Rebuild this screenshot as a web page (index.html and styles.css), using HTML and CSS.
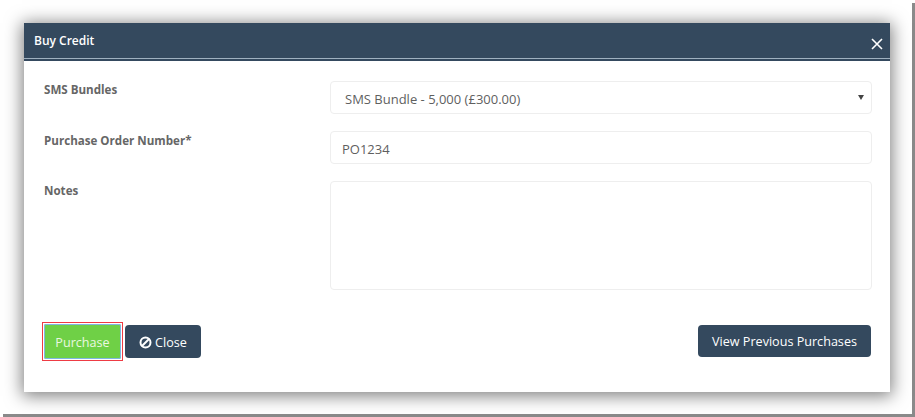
FILE: index.html
```html
<!DOCTYPE html>
<html lang="en">
<head>
<meta charset="utf-8">
<title>Buy Credit</title>
<link rel="stylesheet" href="styles.css">
</head>
<body>
<div class="frame">
  <div class="modal">
    <header class="modal-header">
      <h1 class="modal-title">Buy Credit</h1>
      <svg class="close-x" width="12" height="12" viewBox="0 0 12 12" aria-label="Close"><path d="M1 1L11 11M11 1L1 11" stroke="#fff" stroke-width="1.6" fill="none"/></svg>
    </header>
    <div class="modal-body">
      <div class="row row-select">
        <label class="label">SMS Bundles</label>
        <div class="field field-select"><span class="value">SMS Bundle - 5,000 (£300.00)</span><span class="caret"></span></div>
      </div>
      <div class="row row-input">
        <label class="label label-low">Purchase Order Number*</label>
        <div class="field field-input"><span class="value">PO1234</span></div>
      </div>
      <div class="row row-notes">
        <label class="label label-low">Notes</label>
        <div class="field field-notes"></div>
      </div>
    </div>
    <footer class="modal-footer">
      <div class="actions">
        <span class="highlight"><button class="btn btn-green">Purchase</button></span>
        <button class="btn btn-dark btn-close"><svg width="13" height="13" viewBox="0 0 13 13"><circle cx="6.5" cy="6.5" r="5" stroke="#fff" stroke-width="2" fill="none"/><path d="M3 10L10 3" stroke="#fff" stroke-width="2"/></svg>Close</button>
      </div>
      <button class="btn btn-dark btn-view">View Previous Purchases</button>
    </footer>
  </div>
</div>
</body>
</html>
```
FILE: styles.css
```css
* { box-sizing: border-box; }
html, body { margin: 0; height: 100%; background: #fff; }
body { font-family: "Open Sans", "Noto Sans", sans-serif; overflow: hidden; padding: 3px 0 0 3px; }
.frame {
  width: 912px; height: 414px;
  padding: 20px 22px 22px 21px;
  border-right: 3px solid #8a8a8a;
  border-bottom: 3px solid #8a8a8a;
  background: #fff;
}
.modal {
  width: 866px; height: 369px;
  background: #fff;
  box-shadow: 0 2px 16px 2px rgba(0,0,0,.5);
  display: flex; flex-direction: column;
}
.modal-header {
  height: 38px;
  background: #34495e;
  border-bottom: 2px solid #34495e;
  box-shadow: inset 0 -3px 0 -2px #9fb0bf;
  display: flex; align-items: center; justify-content: space-between;
  padding: 0 7px 0 10px;
}
.modal-title { margin: 0 0 1px; font-size: 12px; font-weight: 600; color: #fff; }
.close-x { margin-top: 5px; }
.modal-body { padding: 20px 18px 0 19px; display: flex; flex-direction: column; }
.row { display: flex; }
.row-select { height: 50px; }
.row-input { height: 50px; }
.label { width: 287px; flex: none; padding: 1px 0 0 1px; font-size: 11.6px; font-weight: 700; color: #666; }
.label-low { padding-top: 2px; }
.field {
  flex: 1;
  border: 1px solid #eeeeee;
  border-radius: 4px;
  font-size: 13px;
  color: #5f5f5f;
  display: flex; align-items: center;
}
.value { padding-top: 2px; }
.field-select { height: 33px; padding: 0 7px 0 14px; justify-content: space-between; }
.field-input { height: 33px; padding: 0 11px; }
.field-notes { height: 109px; }
.caret { width: 0; height: 0; border-left: 3px solid transparent; border-right: 3px solid transparent; border-top: 5px solid #444; }
.modal-footer {
  margin-top: 35px;
  padding: 0 19px 0 18px;
  display: flex; justify-content: space-between; align-items: flex-start;
}
.actions { display: flex; align-items: flex-start; gap: 2px; }
.highlight { display: block; border: 1px solid #ee3b44; padding: 1px; margin-top: -3px; }
.btn {
  font-family: inherit; font-size: 12.6px; color: #fff; border: 0; border-radius: 4px;
  height: 33px; padding: 1px 0 0; display: flex; align-items: center; justify-content: center;
}
.btn-green { width: 77px; height: 35px; background: #6fd046; color: #eaf8e0; border-radius: 2px; box-shadow: 0 0 0 1px #7fb7e0 inset; }
.btn-dark { background: #34495e; }
.btn-close { width: 76px; gap: 3px; }
.btn-view { width: 173px; height: 32px; }
```
